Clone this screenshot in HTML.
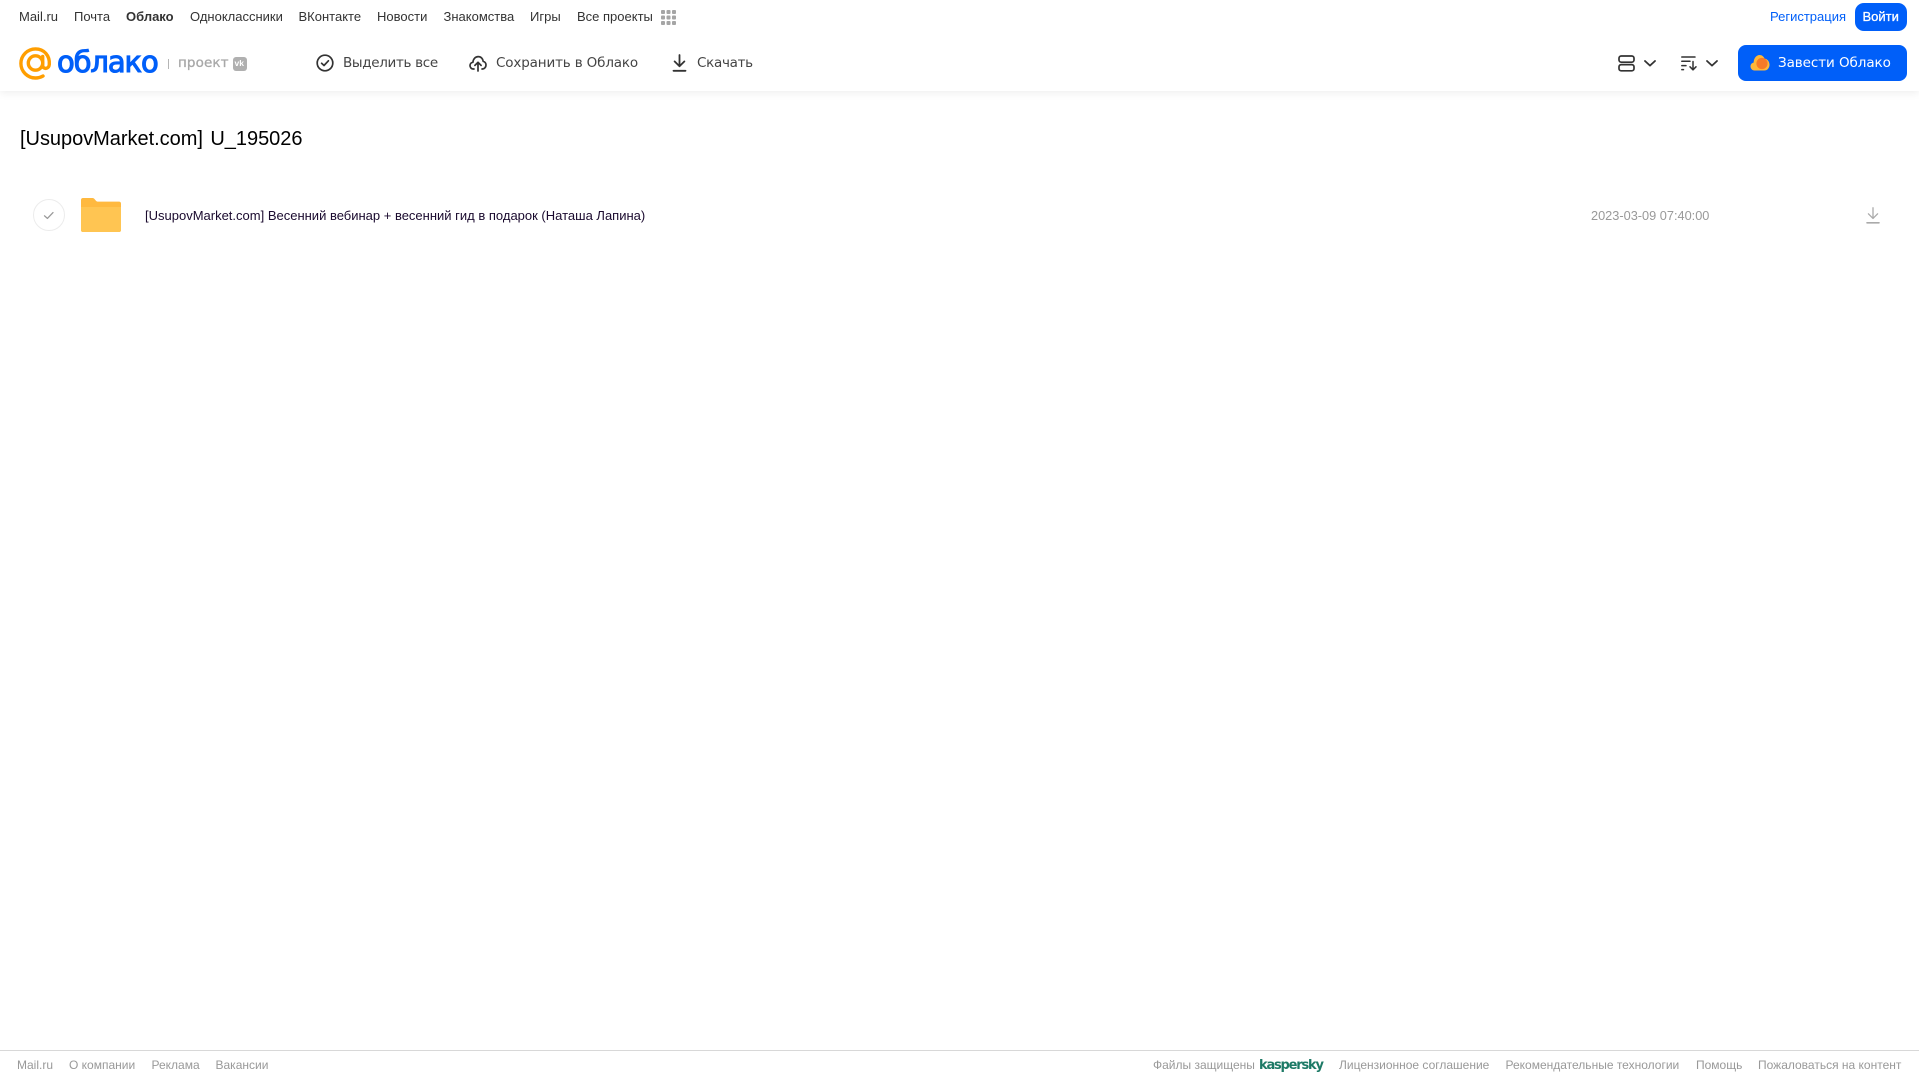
<!DOCTYPE html>
<html lang="ru">
<head>
<meta charset="utf-8">
<title>Облако</title>
<style>
html,body{margin:0;padding:0;background:#fff}
body{width:1919px;height:1079px;position:relative;overflow:hidden;font-family:"Liberation Sans",Arial,sans-serif}
.t{position:absolute;white-space:nowrap;line-height:20px}
.n{top:7px;font-size:13px;color:#333}
.b{top:53px;font-size:13.5px;color:#444;font-family:"DejaVu Sans","Liberation Sans",sans-serif}
.f{top:1055px;font-size:12px;color:#999}
svg{position:absolute;overflow:visible}
#hdr{position:absolute;left:0;top:0;width:1919px;height:91px;background:#fff;box-shadow:0 2px 8px rgba(0,0,0,.07)}
</style>
</head>
<body>
<div id="hdr"></div>

<span class="t n" style="left:19px">Mail.ru</span>
<span class="t n" style="left:74px">Почта</span>
<span class="t n" style="left:126px;font-weight:700">Облако</span>
<span class="t n" style="left:190px">Одноклассники</span>
<span class="t n" style="left:298.5px">ВКонтакте</span>
<span class="t n" style="left:377px">Новости</span>
<span class="t n" style="left:443.5px">Знакомства</span>
<span class="t n" style="left:530px">Игры</span>
<span class="t n" style="left:577px">Все проекты</span>
<svg style="left:661px;top:10px" width="15" height="15" fill="#a5a5a5">
<rect x="0" y="0" width="4" height="4" rx="1"/><rect x="5.5" y="0" width="4" height="4" rx="1"/><rect x="11" y="0" width="4" height="4" rx="1"/>
<rect x="0" y="5.5" width="4" height="4" rx="1"/><rect x="5.5" y="5.5" width="4" height="4" rx="1"/><rect x="11" y="5.5" width="4" height="4" rx="1"/>
<rect x="0" y="11" width="4" height="4" rx="1"/><rect x="5.5" y="11" width="4" height="4" rx="1"/><rect x="11" y="11" width="4" height="4" rx="1"/>
</svg>

<span class="t n" style="left:1770px;color:#005ff9">Регистрация</span>
<div style="position:absolute;left:1855px;top:3px;width:52px;height:28px;background:#005ff9;border-radius:9px"></div>
<span class="t n" style="left:1862.5px;color:#fff;-webkit-text-stroke:.3px #fff">Войти</span>

<svg style="left:19px;top:47px" width="33" height="33" viewBox="0 0 33 33" fill="none">
<circle cx="16.5" cy="16" r="7.2" stroke="#ff9e00" stroke-width="3.4"/>
<path d="M23.7 9.5V18.5C23.7 22.5 29.9 22.5 30.3 17.5C31 8.5 25 1.9 16.5 1.9C8.5 1.9 1.9 8.5 1.9 16.5C1.9 24.5 8.5 31 16.5 31C19.3 31 21.7 30.3 24 29" stroke="#ff9e00" stroke-width="3.4" stroke-linecap="round"/>
</svg>
<span class="t" style="left:57px;top:44px;font-size:29px;line-height:36px;color:#005ff9;-webkit-text-stroke:1.1px #005ff9;font-family:'DejaVu Sans',sans-serif;letter-spacing:-1.1px">облако</span>
<div style="position:absolute;left:168px;top:59px;width:1px;height:10px;background:#b5b5b5"></div>
<span class="t" style="left:178px;top:53px;font-size:13.5px;color:#a8a8a8;-webkit-text-stroke:.3px #a8a8a8;font-family:'DejaVu Sans',sans-serif;letter-spacing:.1px">проект</span>
<div style="position:absolute;left:232.5px;top:56.5px;width:14px;height:14px;background:#b0b0b0;border-radius:3px"></div>
<span class="t" style="left:234.5px;top:58px;font-size:8.5px;line-height:11px;font-weight:700;color:#fff">vk</span>

<svg style="left:316px;top:54px" width="18" height="18" viewBox="0 0 18 18" fill="none" stroke="#333" stroke-width="1.7">
<circle cx="9" cy="9" r="7.8"/><path d="M5.6 9.3L8 11.5L12.4 6.8" stroke-linecap="round" stroke-linejoin="round"/>
</svg>
<span class="t b" style="left:343px;letter-spacing:-.33px">Выделить все</span>

<svg style="left:469px;top:54px" width="18" height="18" viewBox="0 0 18 18" fill="none" stroke="#333" stroke-width="1.7" stroke-linecap="round" stroke-linejoin="round">
<path d="M5 15H4.4C2.4 15 1 13.4 1 11.6C1 9.8 2.3 8.5 3.9 8.3C4.2 5 6.4 2.6 9.2 2.6C12 2.6 13.9 4.7 14.2 7.4C15.9 7.7 17 9.2 17 11C17 13.2 15.4 15 13.4 15H13"/>
<path d="M9 17V8.5M5.9 11.4L9 8.3L12.1 11.4"/>
</svg>
<span class="t b" style="left:496px;letter-spacing:-.15px">Сохранить в Облако</span>

<svg style="left:672px;top:54px" width="15" height="18" viewBox="0 0 15 18" fill="none" stroke="#333" stroke-width="1.8" stroke-linecap="round" stroke-linejoin="round">
<path d="M7.5 1V12M2.6 7.4L7.5 12.3L12.4 7.4"/><path d="M1.5 16.8H13.5"/>
</svg>
<span class="t b" style="left:697px;letter-spacing:-.3px">Скачать</span>

<svg style="left:1618px;top:55px" width="17" height="17" viewBox="0 0 17 17" fill="none" stroke="#333" stroke-width="1.7">
<rect x="1" y="1" width="15" height="6.2" rx="2.2"/><rect x="1" y="9.6" width="15" height="6.2" rx="2.2"/>
</svg>
<svg style="left:1644px;top:60px" width="12" height="7" viewBox="0 0 12 7" fill="none" stroke="#333" stroke-width="1.8" stroke-linecap="round" stroke-linejoin="round"><path d="M1 1L6 5.6L11 1"/></svg>
<svg style="left:1681px;top:56px" width="16" height="15" viewBox="0 0 16 15" fill="none" stroke="#333" stroke-width="1.5" stroke-linecap="round" stroke-linejoin="round">
<path d="M.8 1H14M.8 5.3H9M.8 9.6H5M.8 13.6H2.5"/><path d="M12 5.5V13.6M9 10.8L12 13.8L15 10.8"/>
</svg>
<svg style="left:1706px;top:60px" width="12" height="7" viewBox="0 0 12 7" fill="none" stroke="#333" stroke-width="1.8" stroke-linecap="round" stroke-linejoin="round"><path d="M1 1L6 5.6L11 1"/></svg>

<div style="position:absolute;left:1738px;top:45px;width:169px;height:36px;background:#005ff9;border-radius:8px"></div>
<svg style="left:1750px;top:54px" width="20" height="17" viewBox="0 0 20 17">
<path d="M4.5 16.5C2 16.5 .5 14.4 .5 12.4C.5 10.4 1.8 8.9 3.6 8.6C3.8 4.2 6.4 1 9.6 1C11.8 1 13.6 2.4 14.6 4.6C17.4 5 19.5 7.6 19.5 10.7C19.5 14 17.2 16.5 14.4 16.5Z" fill="#ffb739"/>
<circle cx="12" cy="9.5" r="5.6" fill="#f77a27"/>
</svg>
<span class="t" style="left:1778px;top:53px;font-size:13.5px;color:#fff;font-family:'DejaVu Sans',sans-serif;letter-spacing:-.07px">Завести Облако</span>

<span class="t" style="left:20px;top:126px;font-size:20px;line-height:26px;color:#000;letter-spacing:-.03px;word-spacing:2px">[UsupovMarket.com] U_195026</span>

<div style="position:absolute;left:33px;top:199px;width:30px;height:30px;border:1px solid #ececec;border-radius:50%"></div>
<svg style="left:43px;top:211px" width="12" height="9" viewBox="0 0 12 9" fill="none" stroke="#999" stroke-width="1.3" stroke-linecap="round" stroke-linejoin="round"><path d="M1.5 4.8L4.4 7.4L10 1.6"/></svg>

<svg style="left:81px;top:198px" width="40" height="34" viewBox="0 0 40 34">
<path d="M2 0H11C13 0 13.5 1 14.5 2.2C15.3 3.2 16 3.6 17.5 3.6H38C39.2 3.6 40 4.4 40 5.6V32C40 33.2 39.2 34 38 34H2C.8 34 0 33.2 0 32V2C0 .8.8 0 2 0Z" fill="#ffb93f"/>
<path d="M0 9H40V32C40 33.2 39.2 34 38 34H2C.8 34 0 33.2 0 32Z" fill="#ffc552"/>
</svg>

<span class="t" style="left:145px;top:206px;font-size:13px;color:#1a0a2e">[UsupovMarket.com] Весенний вебинар + весенний гид в подарок (Наташа Лапина)</span>
<span class="t" style="left:1591px;top:206px;font-size:12.75px;color:#999">2023-03-09 07:40:00</span>
<svg style="left:1866px;top:207px" width="14" height="17" viewBox="0 0 14 17" fill="none" stroke="#aaa" stroke-width="1.3" stroke-linecap="round" stroke-linejoin="round">
<path d="M7 .8V11.2M2.4 6.8L7 11.4L11.6 6.8"/><path d="M1 15.8H13" stroke-width="1.6"/>
</svg>

<div style="position:absolute;left:0;top:1050px;width:1919px;height:1px;background:#d8d8d8"></div>
<span class="t f" style="left:17px">Mail.ru</span>
<span class="t f" style="left:69px">О компании</span>
<span class="t f" style="left:151.5px">Реклама</span>
<span class="t f" style="left:215.5px">Вакансии</span>
<span class="t f" style="left:1153px">Файлы защищены</span>
<span class="t" style="left:1259px;top:1056px;font-size:13px;font-weight:700;color:#1d7a66;font-family:'DejaVu Sans',sans-serif;letter-spacing:-1.2px">kaspersky</span>
<span class="t f" style="left:1339px">Лицензионное соглашение</span>
<span class="t f" style="left:1505.5px">Рекомендательные технологии</span>
<span class="t f" style="left:1696px">Помощь</span>
<span class="t f" style="left:1758px">Пожаловаться на контент</span>
</body>
</html>
